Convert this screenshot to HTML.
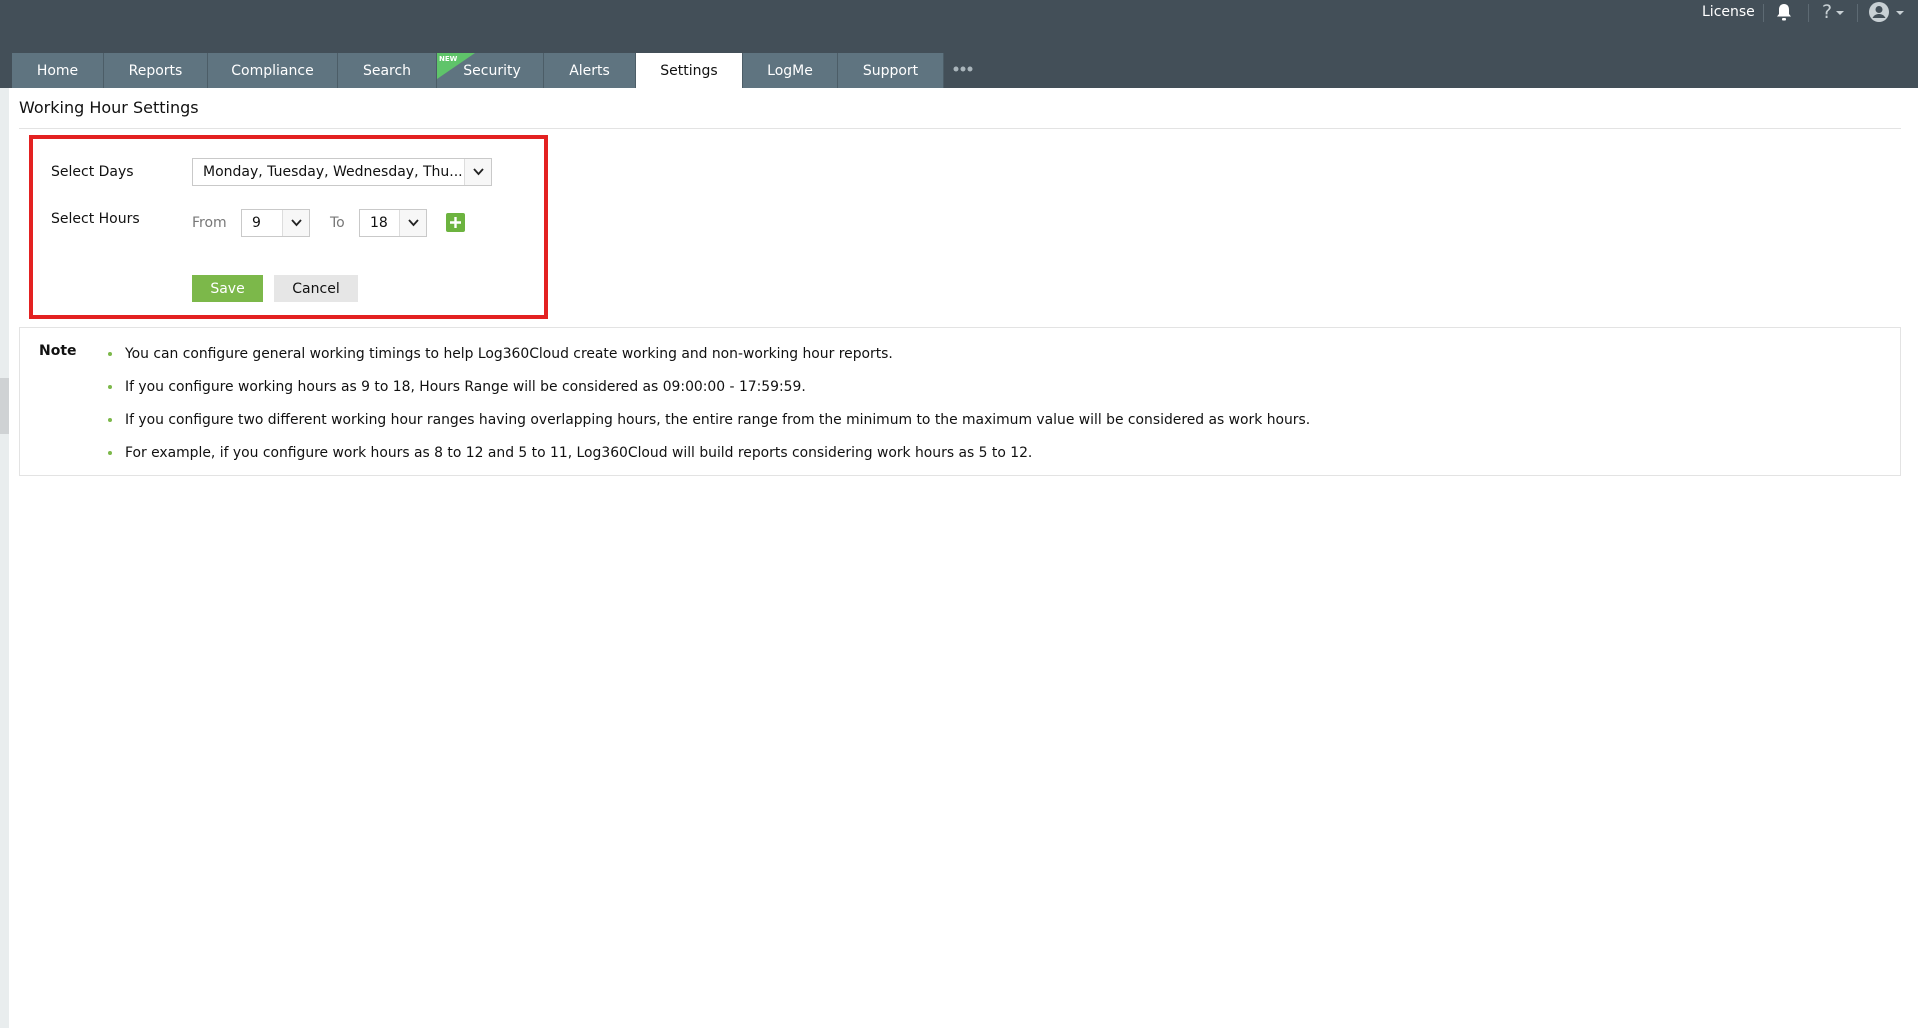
<!DOCTYPE html>
<html><head><meta charset="utf-8"><style>
*{margin:0;padding:0;box-sizing:border-box}
body{width:1918px;height:1028px;background:#fff;font-family:"DejaVu Sans","Liberation Sans",sans-serif;color:#111;position:relative;overflow:hidden;font-size:14px}
.top{position:absolute;left:0;top:0;width:1918px;height:88px;background:#434f58}
.tab{position:absolute;top:53px;height:35px;background:#5f7480;color:#fff;font-size:14px;line-height:37px;text-align:center;border-right:1px solid #4c5d67}
.tab.act{background:#fff;color:#111}
.a{position:absolute}
.lbl{position:absolute;font-size:14px}
.sel{position:absolute;border:1px solid #c9c9c9;background:#fff;height:28px;font-size:14px;line-height:26px;padding-left:10px}
.sel .ar{position:absolute;right:0;top:0;width:27px;height:26px;border-left:1px solid #ddd;background:#f7f7f7}
.ar svg{position:absolute;left:8px;top:9px}
.li{position:absolute;left:125px;font-size:13.9px}
.dot{position:absolute;left:108px;width:4px;height:4px;border-radius:50%;background:#7cb84a}
</style></head><body>
<div class="top"></div>
<div class="tab" style="left:12px;width:92px">Home</div>
<div class="tab" style="left:104px;width:104px">Reports</div>
<div class="tab" style="left:208px;width:130px">Compliance</div>
<div class="tab" style="left:338px;width:99px">Search</div>
<div class="tab" style="left:437px;width:107px;padding-left:4px">Security</div>
<svg class="a" style="left:437px;top:53px" width="40" height="26"><polygon points="0,0 38,0 0,26" fill="#5fc46a"/><text x="2" y="8" font-size="7" fill="#fff" font-family="DejaVu Sans" font-weight="bold">NEW</text></svg>
<div class="tab" style="left:544px;width:92px">Alerts</div>
<div class="tab act" style="left:636px;width:107px">Settings</div>
<div class="tab" style="left:743px;width:95px">LogMe</div>
<div class="tab" style="left:838px;width:106px">Support</div>
<svg class="a" style="left:953px;top:66px" width="22" height="6"><circle cx="3" cy="3" r="2.5" fill="#aab5bb"/><circle cx="10" cy="3" r="2.5" fill="#aab5bb"/><circle cx="17" cy="3" r="2.5" fill="#aab5bb"/></svg>
<div class="a" style="left:1702px;top:4px;color:#fff;font-size:14px">License</div>
<div class="a" style="left:1763px;top:4px;width:1px;height:18px;background:#5d6a73"></div>
<svg class="a" style="left:1775px;top:2px" width="18" height="20"><path d="M9 2c-3.5 0-5 2.5-5 5.5v4.5l-2 2.5h14l-2-2.5V7.5C14 4.5 12.5 2 9 2z" fill="#fff"/><rect x="7" y="16" width="4" height="2.5" rx="1" fill="#fff"/></svg>
<div class="a" style="left:1808px;top:4px;width:1px;height:18px;background:#5d6a73"></div>
<div class="a" style="left:1822px;top:1px;color:#c8d0d4;font-size:19px">?</div>
<svg class="a" style="left:1836px;top:11px" width="8" height="5"><polygon points="0,0 8,0 4,4" fill="#c8d0d4"/></svg>
<div class="a" style="left:1857px;top:4px;width:1px;height:18px;background:#5d6a73"></div>
<svg class="a" style="left:1868px;top:1px" width="22" height="22"><circle cx="11" cy="11" r="10" fill="#c8d0d4"/><circle cx="11" cy="8.5" r="3.5" fill="#434f58"/><path d="M4.5 17c1.5-3 4-4 6.5-4s5 1 6.5 4" fill="#434f58"/></svg>
<svg class="a" style="left:1896px;top:11px" width="8" height="5"><polygon points="0,0 8,0 4,4" fill="#c8d0d4"/></svg>

<div class="a" style="left:0;top:88px;width:9px;height:940px;background:#e9edee"></div>
<div class="a" style="left:0;top:378px;width:9px;height:56px;background:#cfd2d4"></div>

<div class="a" style="left:19px;top:98px;font-size:16px">Working Hour Settings</div>
<div class="a" style="left:19px;top:128px;width:1882px;height:1px;background:#e3e3e3"></div>

<div class="a" style="left:29px;top:135px;width:519px;height:184px;border:4px solid #e32121"></div>
<div class="lbl" style="left:51px;top:164px">Select Days</div>
<div class="sel" style="left:192px;top:158px;width:300px">Monday, Tuesday, Wednesday, Thu...<div class="ar"><svg width="11" height="8"><path d="M1 1l4.5 5 4.5-5" stroke="#222" stroke-width="1.8" fill="none"/></svg></div></div>
<div class="lbl" style="left:51px;top:211px">Select Hours</div>
<div class="lbl" style="left:192px;top:215px;color:#777">From</div>
<div class="sel" style="left:241px;top:209px;width:69px">9<div class="ar"><svg width="11" height="8"><path d="M1 1l4.5 5 4.5-5" stroke="#222" stroke-width="1.8" fill="none"/></svg></div></div>
<div class="lbl" style="left:330px;top:215px;color:#777">To</div>
<div class="sel" style="left:359px;top:209px;width:68px">18<div class="ar"><svg width="11" height="8"><path d="M1 1l4.5 5 4.5-5" stroke="#222" stroke-width="1.8" fill="none"/></svg></div></div>
<div class="a" style="left:446px;top:213px;width:19px;height:19px;background:#6cb33f;border-radius:2px"><svg width="19" height="19"><path d="M9.5 4v11M4 9.5h11" stroke="#fff" stroke-width="2.4"/></svg></div>
<div class="a" style="left:192px;top:275px;width:71px;height:27px;background:#7cb84a;color:#fff;text-align:center;line-height:28px;font-size:14px">Save</div>
<div class="a" style="left:274px;top:275px;width:84px;height:27px;background:#e6e6e6;text-align:center;line-height:28px;font-size:14px">Cancel</div>

<div class="a" style="left:19px;top:327px;width:1882px;height:149px;border:1px solid #e3e3e3"></div>
<div class="a" style="left:39px;top:343px;font-weight:bold;font-size:14px">Note</div>
<div class="dot" style="top:352px"></div><div class="li" style="top:346px">You can configure general working timings to help Log360Cloud create working and non-working hour reports.</div>
<div class="dot" style="top:385px"></div><div class="li" style="top:379px">If you configure working hours as 9 to 18, Hours Range will be considered as 09:00:00 - 17:59:59.</div>
<div class="dot" style="top:418px"></div><div class="li" style="top:412px">If you configure two different working hour ranges having overlapping hours, the entire range from the minimum to the maximum value will be considered as work hours.</div>
<div class="dot" style="top:451px"></div><div class="li" style="top:445px">For example, if you configure work hours as 8 to 12 and 5 to 11, Log360Cloud will build reports considering work hours as 5 to 12.</div>
</body></html>
